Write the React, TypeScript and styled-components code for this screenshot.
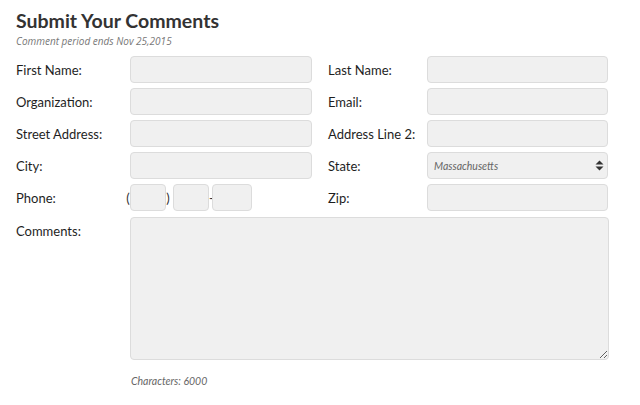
import React from 'react';
import styled, { createGlobalStyle } from 'styled-components';

const GlobalStyle = createGlobalStyle`
  html, body {
    margin: 0;
    padding: 0;
    background: #fff;
  }
  body {
    font-family: Lato, 'Noto Sans', sans-serif;
    color: #222;
  }
`;

const Page = styled.div`
  width: 640px;
  height: 405px;
  padding: 9px 16px 0 16px;
  box-sizing: border-box;
`;

const Title = styled.h1`
  margin: 0;
  font-family: Lato, sans-serif;
  font-size: 19.5px;
  font-weight: 700;
  line-height: 24px;
  color: #333;
`;

const Note = styled.div`
  margin-top: 1px;
  font-family: 'Open Sans', sans-serif;
  font-style: italic;
  font-size: 10px;
  line-height: 14px;
  color: #777;
`;

const Form = styled.form`
  display: grid;
  grid-template-columns: 114px 182px 115px 181px;
  grid-auto-rows: 27px;
  row-gap: 5px;
  margin-top: 8px;
`;

const Label = styled.label<{ $right?: boolean }>`
  display: flex;
  align-items: center;
  padding-left: ${(p) => (p.$right ? '16px' : '0')};
  font-size: 13px;
  color: #1e1e1e;
  height: 27px;
  white-space: nowrap;
`;

const Input = styled.input<{ $w?: number; $gap?: number }>`
  box-sizing: border-box;
  width: ${(p) => (p.$w ? `${p.$w}px` : '100%')};
  height: 27px;
  margin: 0 0 0 ${(p) => p.$gap ?? 0}px;
  padding: 0 6px;
  background: #f0f0f0;
  border: 1px solid #dcdcdc;
  border-radius: 4px;
  font-family: Lato, sans-serif;
  font-size: 12px;
  outline: none;
`;

const SelectWrap = styled.div`
  position: relative;
  height: 27px;
`;

const Select = styled.select`
  box-sizing: border-box;
  width: 100%;
  height: 27px;
  margin: 0;
  padding: 0 6px;
  appearance: none;
  background: #f0f0f0;
  border: 1px solid #dcdcdc;
  border-radius: 4px;
  font-family: Lato, sans-serif;
  font-style: italic;
  font-size: 10.5px;
  color: #666;
  outline: none;
`;

const Arrows = styled.svg`
  position: absolute;
  right: 4px;
  top: 8px;
  pointer-events: none;
`;

const PhoneGroup = styled.div`
  display: flex;
  align-items: center;
  margin-left: -4px;
  font-size: 13px;
  color: #333;
`;

const Paren = styled.span`
  width: 4px;
  text-align: center;
`;

const Dash = styled.span`
  width: 3px;
  text-align: center;
`;

const Comments = styled.textarea`
  box-sizing: border-box;
  grid-column: 2 / 5;
  grid-row: span 5;
  width: 479px;
  height: 143px;
  margin: 1px 0 0 0;
  padding: 6px;
  background: #f0f0f0;
  border: 1px solid #dcdcdc;
  border-radius: 4px;
  resize: vertical;
  outline: none;
`;

const CommentsLabel = styled(Label)`
  margin-top: 1px;
`;

const Counter = styled.div`
  margin: 4px 0 0 115px;
  font-family: Lato, sans-serif;
  font-style: italic;
  font-weight: 400;
  font-size: 10.5px;
  color: #666;
`;

const rows: [string, string][] = [
  ['First Name:', 'Last Name:'],
  ['Organization:', 'Email:'],
  ['Street Address:', 'Address Line 2:'],
];

export default function App() {
  return (
    <Page>
      <GlobalStyle />
      <Title>Submit Your Comments</Title>
      <Note>Comment period ends Nov 25,2015</Note>
      <Form onSubmit={(e) => e.preventDefault()}>
        {rows.map(([left, right]) => (
          <React.Fragment key={left}>
            <Label>{left}</Label>
            <Input />
            <Label $right>{right}</Label>
            <Input />
          </React.Fragment>
        ))}
        <Label>City:</Label>
        <Input />
        <Label $right>State:</Label>
        <SelectWrap>
          <Select defaultValue="MA">
            <option value="MA">Massachusetts</option>
          </Select>
          <Arrows width="9" height="11" viewBox="0 0 9 11">
            <path d="M4.5 0.5 L8.5 4.5 L0.5 4.5 Z" fill="#333" />
            <path d="M4.5 10.5 L8.5 6.5 L0.5 6.5 Z" fill="#333" />
          </Arrows>
        </SelectWrap>
        <Label>Phone:</Label>
        <PhoneGroup>
          <Paren>(</Paren>
          <Input $w={36} />
          <Paren>)</Paren>
          <Input $w={36} $gap={3} />
          <Dash>-</Dash>
          <Input $w={40} />
        </PhoneGroup>
        <Label $right>Zip:</Label>
        <Input />
        <CommentsLabel>Comments:</CommentsLabel>
        <Comments />
      </Form>
      <Counter>Characters: 6000</Counter>
    </Page>
  );
}
